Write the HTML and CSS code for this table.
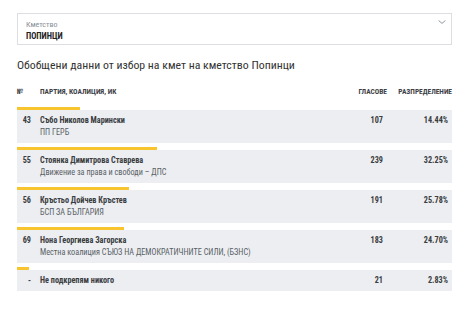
FILE: index.html
```html
<!DOCTYPE html>
<html lang="bg">
<head>
<meta charset="utf-8">
<link rel="stylesheet" href="styles.css">
</head>
<body>
<div class="page">
  <div class="select">
    <div class="select-text">
      <div class="select-label">Кметство</div>
      <div class="select-value">ПОПИНЦИ</div>
    </div>
    <svg class="chevron" width="8" height="4" viewBox="0 0 8 4"><path d="M0.6 0.5 L4 3.4 L7.4 0.5" fill="none" stroke="#9097a0" stroke-width="1"/></svg>
  </div>

  <h1 class="title">Обобщени данни от избор на кмет на кметство Попинци</h1>

  <div class="thead">
    <div class="c-num">№</div>
    <div class="c-name">Партия, коалиция, ИК</div>
    <div class="c-votes">Гласове</div>
    <div class="c-pct">Разпределение</div>
  </div>

  <div class="row">
    <div class="bar" style="width:14.44%"></div>
    <div class="box">
      <div class="c-num">43</div>
      <div class="c-name"><div class="cand">Събо Николов Марински</div><div class="party">ПП ГЕРБ</div></div>
      <div class="c-votes">107</div>
      <div class="c-pct">14.44%</div>
    </div>
  </div>

  <div class="row">
    <div class="bar" style="width:32.25%"></div>
    <div class="box">
      <div class="c-num">55</div>
      <div class="c-name"><div class="cand">Стоянка Димитрова Ставрева</div><div class="party">Движение за права и свободи – ДПС</div></div>
      <div class="c-votes">239</div>
      <div class="c-pct">32.25%</div>
    </div>
  </div>

  <div class="row">
    <div class="bar" style="width:25.78%"></div>
    <div class="box">
      <div class="c-num">56</div>
      <div class="c-name"><div class="cand">Кръстьо Дойчев Кръстев</div><div class="party">БСП ЗА БЪЛГАРИЯ</div></div>
      <div class="c-votes">191</div>
      <div class="c-pct">25.78%</div>
    </div>
  </div>

  <div class="row">
    <div class="bar" style="width:24.70%"></div>
    <div class="box">
      <div class="c-num">69</div>
      <div class="c-name"><div class="cand">Нона Георгиева Загорска</div><div class="party">Местна коалиция СЪЮЗ НА ДЕМОКРАТИЧНИТЕ СИЛИ, (БЗНС)</div></div>
      <div class="c-votes">183</div>
      <div class="c-pct">24.70%</div>
    </div>
  </div>

  <div class="row">
    <div class="bar" style="width:2.83%"></div>
    <div class="box single">
      <div class="c-num">-</div>
      <div class="c-name"><div class="cand">Не подкрепям никого</div></div>
      <div class="c-votes">21</div>
      <div class="c-pct">2.83%</div>
    </div>
  </div>
</div>
</body>
</html>
```

FILE: styles.css
```css
* { box-sizing: border-box; }
html, body { margin: 0; padding: 0; background: #fff; }
body {
  font-family: "Roboto Condensed", "Liberation Sans Narrow", Roboto, sans-serif;
  font-stretch: condensed;
  color: #333;
}
.page {
  width: 470px;
  padding: 13px 18px 0 17px;
}
.select {
  height: 32px;
  border: 1px solid #dcdee1;
  display: flex;
  justify-content: space-between;
  align-items: flex-start;
  padding: 6px 5px 0 8px;
}
.select-label {
  font-size: 8px;
  line-height: 10px;
  color: #8a8f96;
}
.select-value {
  font-size: 8.5px;
  line-height: 12px;
  font-weight: 700;
  color: #222;
}
.chevron { margin-top: 0; }
.title {
  margin: 12px 0 0 0;
  font-size: 11.8px;
  line-height: 16px;
  font-weight: 400;
  color: #333;
}
.thead {
  display: flex;
  align-items: center;
  height: 14px;
  line-height: 14px;
  margin-top: 12px;
  font-size: 7.4px;
  font-weight: 700;
  text-transform: uppercase;
  color: #3d4146;
}
.thead .c-num { width: 23px; text-align: left; }
.c-num { width: 13px; text-align: right; flex: none; }
.c-name { flex: 1; padding-left: 10px; }
.thead .c-name { padding-left: 0; }
.c-votes { width: 60px; text-align: right; flex: none; }
.c-pct { width: 65px; text-align: right; flex: none; }
.row { margin-top: 8px; }
.row + .row { margin-top: 4px; }
.bar { height: 3px; background: #f8c52f; }
.box {
  background: #eceef1;
  display: flex;
  align-items: flex-start;
  padding: 5px 4px 0 0;
  height: 33px;
  font-size: 8.2px;
  line-height: 11px;
}
.box.single { height: 21px; }
.box .c-num, .box .c-votes, .box .c-pct, .cand { font-weight: 700; color: #3a3d42; }
.box .c-num { width: 14px; }
.box .c-name { padding-left: 9px; }
.party { color: #5a5f66; margin-top: 1px; }
```
